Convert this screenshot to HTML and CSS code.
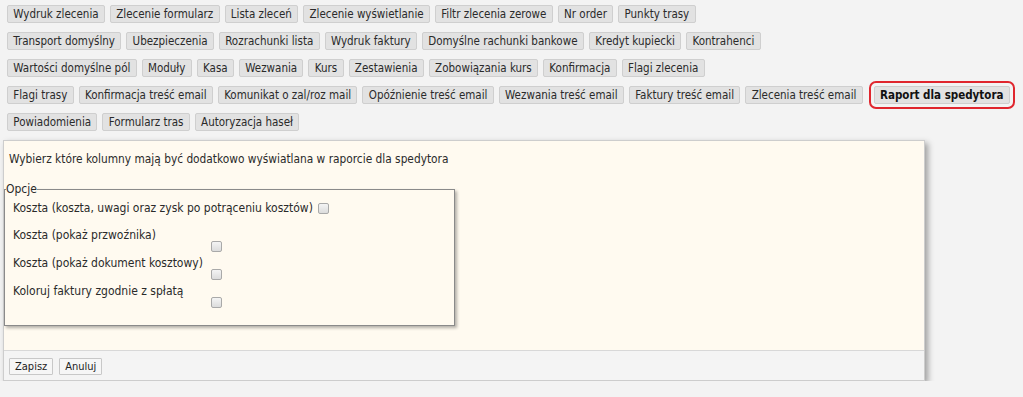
FILE: index.html
```html
<!DOCTYPE html>
<html lang="pl">
<head>
<meta charset="utf-8">
<title>Raport dla spedytora</title>
<link rel="stylesheet" href="styles.css">
</head>
<body>
<nav class="tabs">
  <div class="tab-row">
    <button class="tab">Wydruk zlecenia</button>
    <button class="tab">Zlecenie formularz</button>
    <button class="tab">Lista zleceń</button>
    <button class="tab">Zlecenie wyświetlanie</button>
    <button class="tab">Filtr zlecenia zerowe</button>
    <button class="tab">Nr order</button>
    <button class="tab">Punkty trasy</button>
  </div>
  <div class="tab-row">
    <button class="tab">Transport domyślny</button>
    <button class="tab">Ubezpieczenia</button>
    <button class="tab">Rozrachunki lista</button>
    <button class="tab">Wydruk faktury</button>
    <button class="tab">Domyślne rachunki bankowe</button>
    <button class="tab">Kredyt kupiecki</button>
    <button class="tab">Kontrahenci</button>
  </div>
  <div class="tab-row">
    <button class="tab">Wartości domyślne pól</button>
    <button class="tab">Moduły</button>
    <button class="tab">Kasa</button>
    <button class="tab">Wezwania</button>
    <button class="tab">Kurs</button>
    <button class="tab">Zestawienia</button>
    <button class="tab">Zobowiązania kurs</button>
    <button class="tab">Konfirmacja</button>
    <button class="tab">Flagi zlecenia</button>
  </div>
  <div class="tab-row">
    <button class="tab">Flagi trasy</button>
    <button class="tab">Konfirmacja treść email</button>
    <button class="tab">Komunikat o zal/roz mail</button>
    <button class="tab">Opóźnienie treść email</button>
    <button class="tab">Wezwania treść email</button>
    <button class="tab">Faktury treść email</button>
    <button class="tab">Zlecenia treść email</button>
    <button class="tab tab-active">Raport dla spedytora</button>
  </div>
  <div class="tab-row">
    <button class="tab">Powiadomienia</button>
    <button class="tab">Formularz tras</button>
    <button class="tab">Autoryzacja haseł</button>
  </div>
</nav>

<section class="panel">
  <div class="panel-body">
    <p class="intro">Wybierz które kolumny mają być dodatkowo wyświatlana w raporcie dla spedytora</p>
    <fieldset class="options">
      <legend>Opcje</legend>
      <div class="opt opt-inline">
        <label>Koszta (koszta, uwagi oraz zysk po potrąceniu kosztów)</label>
        <input type="checkbox" class="cb">
      </div>
      <div class="opt">
        <label>Koszta (pokaż przwoźnika)</label>
        <input type="checkbox" class="cb cb-below">
      </div>
      <div class="opt">
        <label>Koszta (pokaż dokument kosztowy)</label>
        <input type="checkbox" class="cb cb-below">
      </div>
      <div class="opt">
        <label>Koloruj faktury zgodnie z spłatą</label>
        <input type="checkbox" class="cb cb-below">
      </div>
    </fieldset>
  </div>
  <div class="panel-footer">
    <button class="fbtn">Zapisz</button>
    <button class="fbtn">Anuluj</button>
  </div>
</section>
</body>
</html>
```

FILE: styles.css
```css
html, body {
  margin: 0;
  padding: 0;
  background: #f3f3f3;
  font-family: "DejaVu Sans Condensed", "DejaVu Sans", sans-serif;
  font-size: 11.5px;
  color: #2a2a2a;
}

.tabs {
  padding: 5px 0 0 7px;
}

.tab-row {
  display: flex;
  gap: 5px;
  margin-bottom: 9px;
  height: 18px;
}

.tab {
  font-family: inherit;
  font-size: 11.5px;
  color: #2a2a2a;
  background: #e2e2e2;
  border: 1px solid #cfcfcf;
  border-radius: 2px;
  height: 18px;
  padding: 0 5.3px;
  margin: 0;
  line-height: 16px;
  white-space: nowrap;
}

.tab-active {
  font-weight: bold;
  color: #111;
  outline: 2px solid #e0262e;
  outline-offset: 3px;
  margin-left: 6px;
}

.panel {
  margin: 7px 0 0 3px;
  width: 920px;
  border: 1px solid #cdcdcd;
  background: #fffaf0;
  box-shadow: 3px 3px 6px rgba(0, 0, 0, 0.35);
  font-size: 12px;
}

.panel-body {
  padding: 11px 0 24px 0;
}

.intro {
  margin: 0 0 17px 5px;
  line-height: 14px;
  font-size: 11.8px;
}

.options {
  margin: 0;
  width: 437px;
  border: 1px solid #8a8a8a;
  padding: 5px 4px 17px 8px;
  box-shadow: 2px 2px 3px rgba(0, 0, 0, 0.3);
}

.options legend {
  padding: 0;
  margin-left: -7px;
  line-height: 13px;
}

.opt {
  line-height: 14px;
}

.opt label {
  display: block;
  padding: 4px 0 0 0;
}

.opt-inline {
  display: flex;
  align-items: center;
  gap: 5px;
  margin-bottom: 9px;
}

.opt-inline label {
  padding: 0;
}

.cb {
  appearance: none;
  -webkit-appearance: none;
  width: 11px;
  height: 11px;
  margin: 0;
  border: 1px solid #a9a9a9;
  border-radius: 2px;
  background: linear-gradient(#f4f4f4, #dcdcdc);
  box-sizing: border-box;
}

.cb-below {
  display: block;
  margin: -1px 0 0 198px;
}

.panel-footer {
  background: #f4f4f4;
  border-top: 1px solid #d8d8d8;
  padding: 7px 6px 5px 5px;
  display: flex;
  gap: 6px;
}

.fbtn {
  font-family: "DejaVu Sans Condensed", sans-serif;
  font-size: 11px;
  color: #222;
  background: #f6f6f6;
  border: 1px solid #c8c8c8;
  border-radius: 1px;
  height: 17px;
  padding: 0 5px;
  line-height: 15px;
}
```
